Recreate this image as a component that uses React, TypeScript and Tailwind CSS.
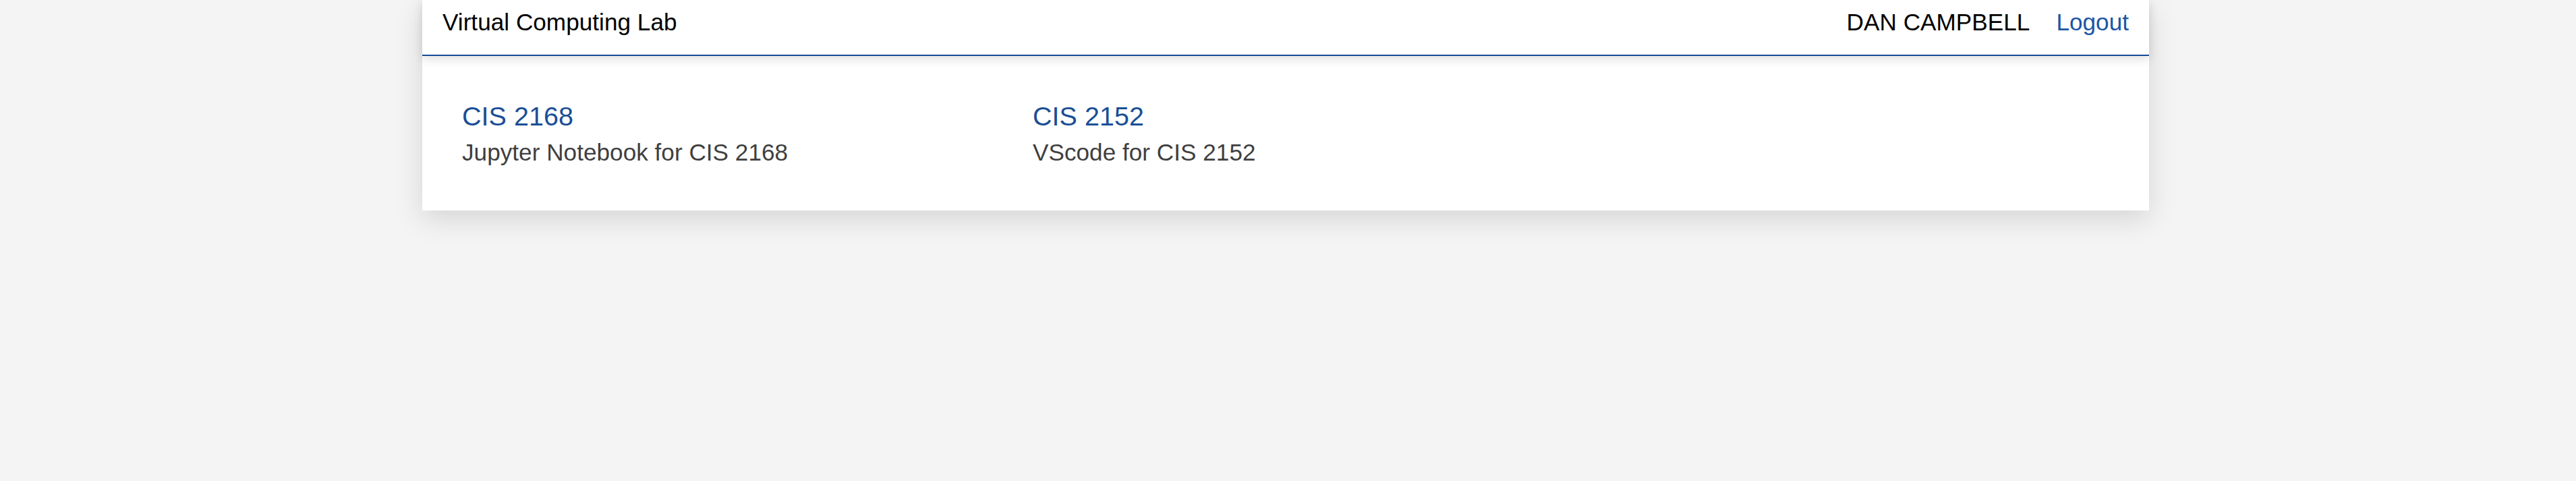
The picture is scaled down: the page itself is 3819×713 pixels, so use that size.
const courses = [
  { code: "CIS 2168", desc: "Jupyter Notebook for CIS 2168" },
  { code: "CIS 2152", desc: "VScode for CIS 2152" },
];

export default function App() {
  return (
    <div
      className="min-h-screen bg-[#f4f4f4] pr-[7px]"
      style={{ fontFamily: '"Liberation Sans", Arial, sans-serif' }}
    >
      <div className="mx-auto w-[2560px] bg-white shadow-[0_12px_40px_rgba(0,0,0,0.13)]">
        <header className="relative z-10 flex h-[82.5px] items-start justify-between border-b-[2.5px] border-[#174a96] bg-white px-[30px] pt-[13px] text-[35.2px] leading-[40px] shadow-[0_5px_14px_rgba(0,0,0,0.12)]">
          <div className="text-black">Virtual Computing Lab</div>
          <div className="flex gap-[39px]">
            <span className="text-black">DAN CAMPBELL</span>
            <a href="#" className="text-[#1c56a4]">
              Logout
            </a>
          </div>
        </header>
        <main className="grid grid-cols-3 p-[11px]">
          {courses.map((c) => (
            <div key={c.code} className="px-[48px] pt-[50px] pb-[49.5px]">
              <a
                href="#"
                className="block text-[39.6px] leading-[56.5px] text-[#1a4f96]"
              >
                {c.code}
              </a>
              <p className="text-[35.2px] leading-[51.2px] text-[#3f3f3f]">
                {c.desc}
              </p>
            </div>
          ))}
        </main>
      </div>
    </div>
  );
}
